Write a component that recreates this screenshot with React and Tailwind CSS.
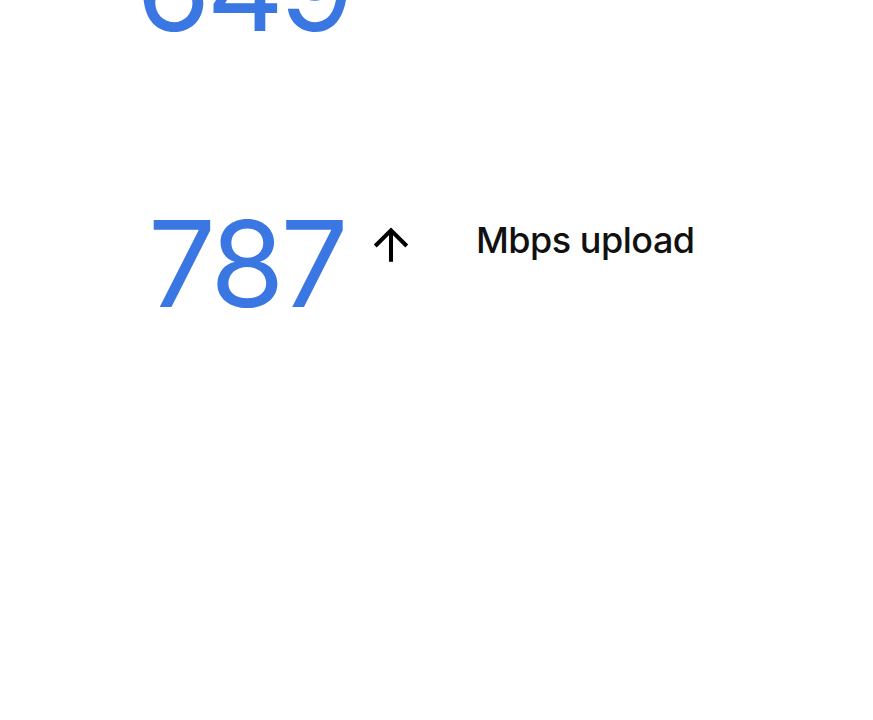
function Arrow({ up }) {
    return (
        <svg viewBox="0 0 24 24" className="w-[54px] h-[54px]" fill="none" stroke="black" strokeWidth="1.8" strokeLinecap="butt" strokeLinejoin="miter">
            {up
                ? <path d="M5 12l7-7 7 7M12 5v14" />
                : <path d="M5 12l7 7 7-7M12 19V5" />}
        </svg>
    )
}

function SpeedRow({ value, label, up, className = "" }) {
    return (
        <div className={`flex items-start ${className}`}>
            <div className="w-[216px] text-[120px] leading-none font-normal text-[#3a77e3] tracking-[-4px]">
                {value}
            </div>
            <div className="mt-[15px] w-[56px]">
                <Arrow up={up} />
            </div>
            <div className="ml-[56px] mt-[18px] text-[36px] leading-none font-medium tracking-[-0.5px] text-[#111]">
                {label}
            </div>
        </div>
    )
}

export default function App() {
    return (
        <div className="w-[873px] h-[720px] bg-white overflow-hidden" style={{ fontFamily: "Inter, 'Noto Sans', sans-serif" }}>
            <div className="pl-[148px] mt-[-72px]">
                <SpeedRow value="649" label="Mbps download" up={false} className="h-[276px] -ml-[12px]" />
                <SpeedRow value="787" label="Mbps upload" up className="h-[273px]" />
            </div>
        </div>
    )
}
